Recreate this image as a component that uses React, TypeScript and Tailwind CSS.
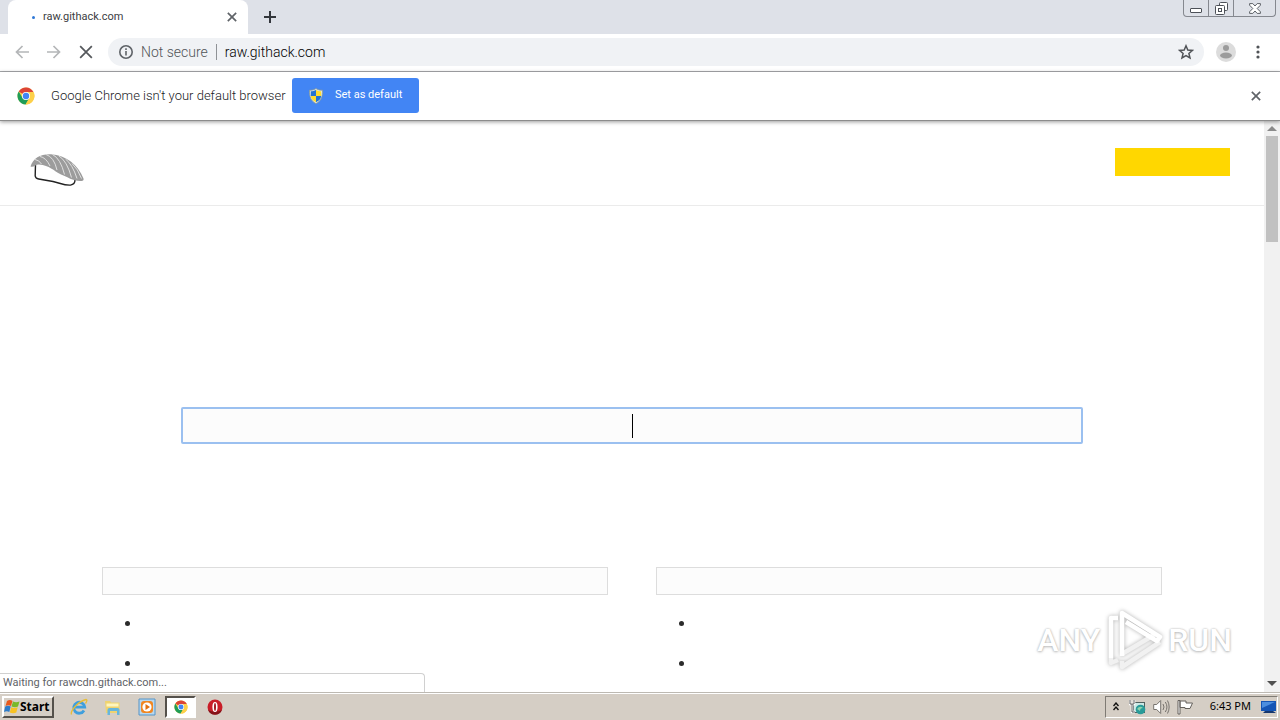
import React from "react";

function ChromeLogo({ className }: { className?: string }) {
  return (
    <svg viewBox="0 0 18 18" className={className} aria-hidden="true">
      <circle cx="9" cy="9" r="8.500" fill="#fdd04a" />
      <path d="M9 9 1.700 4.600A8.500 8.500 0 0 1 16.400 5H9Z" fill="#dc4437" />
      <path d="M1.700 4.600A8.500 8.500 0 0 0 8.600 17.500L12.400 11 9 9 5.600 11Z" fill="#1f9d58" />
      <path d="M9 5h7.400A8.500 8.500 0 0 1 8.600 17.500L12.400 11Z" fill="#fdd04a" />
      <circle cx="9" cy="9" r="4" fill="#fff" />
      <circle cx="9" cy="9" r="3.200" fill="#4285f4" />
    </svg>
  );
}

function Shield() {
  return (
    <svg viewBox="0 0 14 16" className="h-4 w-3.5" aria-hidden="true">
      <path d="M7 .5C5 2 3 2.200.5 2.200.400 8.500 1.600 12.700 7 15.600c5.400-2.900 6.600-7.100 6.500-13.400C11 2.200 9 2 7 .5Z" fill="#dfe9ee" stroke="#8c9a90" strokeWidth=".8" />
      <path d="M7 2C5.300 3 3.700 3.200 1.800 3.200V8H7Z" fill="#2373d2" />
      <path d="M7 2c1.700 1 3.300 1.200 5.200 1.200V8H7Z" fill="#ffdc2e" />
      <path d="M1.800 8H7v6.200C4 12.700 2 11 1.800 8Z" fill="#ffdc2e" />
      <path d="M12.200 8H7v6.200c3-1.500 5-3.200 5.200-6.200Z" fill="#2373d2" />
    </svg>
  );
}

function Cross({ className }: { className?: string }) {
  return (
    <svg viewBox="0 0 12 12" className={className} fill="none" stroke="currentColor" aria-hidden="true">
      <path d="m1 1 10 10m0-10L1 11" />
    </svg>
  );
}

function TabStrip() {
  return (
    <div className="flex h-[34px] shrink-0 items-start bg-[#dee1e8] pl-2">
      <div className="flex h-full w-60 items-center rounded-t-lg bg-white pl-6 pr-[9px]">
        <span className="mr-2 h-[3px] w-[3px] rounded-full bg-[#2f78d6]" />
        <span className="grow text-[11px] text-[#3c4043]">raw.githack.com</span>
        <button type="button" aria-label="Close tab" className="p-0.5 text-[#5f6368]">
          <Cross className="h-2.5 w-2.5 stroke-2" />
        </button>
      </div>
      <button type="button" aria-label="New tab" className="ml-4 mt-[11px] text-[#33363c]">
        <svg viewBox="0 0 12 12" className="h-3 w-3" stroke="currentColor" strokeWidth="2" aria-hidden="true">
          <path d="M6 0v12M0 6h12" />
        </svg>
      </button>
      <div className="ml-auto mr-1 flex h-[17px] rounded-b border border-t-0 border-[#85888f] text-[#4d5158]">
        <button type="button" aria-label="Minimize" className="flex w-[25px] items-end justify-center border-r border-[#85888f] pb-[3px]">
          <span className="h-[5px] w-3 rounded-[1px] border border-[#4d5158] bg-white" />
        </button>
        <button type="button" aria-label="Restore" className="flex w-[25px] items-center justify-center border-r border-[#85888f]">
          <svg viewBox="0 0 13 13" className="h-[13px] w-[13px]" fill="#fff" stroke="currentColor" aria-hidden="true">
            <rect x="4.500" y=".5" width="8" height="8" rx="1" />
            <rect x=".5" y="3.500" width="9" height="9" rx="1" />
            <rect x="3.500" y="6.500" width="3" height="3" />
          </svg>
        </button>
        <button type="button" aria-label="Close" className="flex w-[41px] items-center justify-center">
          <svg viewBox="0 0 12 11" className="h-[11px] w-3" fill="#fff" stroke="currentColor" strokeWidth=".9" aria-hidden="true">
            <path d="M.6.600h3.200L6 3 8.200.600h3.200v1.600L8.200 5.500l3.200 3.300v1.600H8.200L6 8l-2.200 2.400H.6V8.800l3.200-3.300L.6 2.200Z" />
          </svg>
        </button>
      </div>
    </div>
  );
}

function Toolbar() {
  return (
    <div className="flex h-[38px] shrink-0 items-center border-b border-[#a9abae] bg-white pb-px pl-[15px] pr-5">
      <button type="button" aria-label="Back" className="text-[#b4b6b8]">
        <svg viewBox="0 0 14 14" className="h-3.5 w-3.5" fill="none" stroke="currentColor" strokeWidth="1.700" aria-hidden="true">
          <path d="M14 7H1.500M7.500 1 1.500 7l6 6" />
        </svg>
      </button>
      <button type="button" aria-label="Forward" className="ml-[18px] text-[#b4b6b8]">
        <svg viewBox="0 0 14 14" className="h-3.5 w-3.5" fill="none" stroke="currentColor" strokeWidth="1.700" aria-hidden="true">
          <path d="M0 7h12.500M6.500 1l6 6-6 6" />
        </svg>
      </button>
      <button type="button" aria-label="Stop loading" className="ml-[18px] text-[#55585c]">
        <Cross className="h-3.5 w-3.5 stroke-[1.500]" />
      </button>
      <div className="ml-[15px] flex h-7 grow items-center rounded-full bg-[#f0f2f5] pl-[11px] pr-2.5">
        <svg viewBox="0 0 14 14" className="h-3.5 w-3.5" fill="none" stroke="#5f6368" strokeWidth="1.600" aria-hidden="true">
          <circle cx="7" cy="7" r="6.200" />
          <path d="M7 6v4.500M7 3.300v1.700" />
        </svg>
        <span className="ml-2 text-sm font-light text-[#505458]">Not secure</span>
        <span className="mx-2 h-4 w-px bg-[#8f9296]" />
        <input aria-label="Address" defaultValue="raw.githack.com" className="min-w-0 grow bg-transparent text-sm font-light text-black outline-none" />
        <button type="button" aria-label="Bookmark this page">
          <svg viewBox="0 0 16 16" className="h-4 w-4" fill="none" stroke="#505357" strokeWidth="1.500" aria-hidden="true">
            <path d="m8 1.800 1.800 4.200 4.600.4-3.500 3 1.100 4.500L8 11.500l-4 2.400 1.100-4.500-3.500-3L6.200 6Z" />
          </svg>
        </button>
      </div>
      <button type="button" aria-label="Profile" className="ml-3">
        <svg viewBox="0 0 20 20" className="h-5 w-5" aria-hidden="true">
          <circle cx="10" cy="10" r="10" fill="#dcdcdc" />
          <circle cx="10" cy="6" r="3" fill="#9b9b9b" />
          <ellipse cx="10" cy="13.500" rx="6" ry="2.900" fill="#9b9b9b" />
        </svg>
      </button>
      <button type="button" aria-label="Menu" className="ml-5">
        <svg viewBox="0 0 4 14" className="h-3.5 w-1" fill="#505357" aria-hidden="true">
          <circle cx="2" cy="2" r="1.600" />
          <circle cx="2" cy="7" r="1.600" />
          <circle cx="2" cy="12" r="1.600" />
        </svg>
      </button>
    </div>
  );
}

function DefaultBrowserBar() {
  return (
    <div className="z-10 flex h-[49px] shrink-0 items-center border-b border-[#8c8c8c] bg-white pb-px pl-[17px] pr-[19px] shadow-[0_1px_4px_rgba(0,0,0,0.4)]">
      <ChromeLogo className="h-[18px] w-[18px]" />
      <span className="ml-4 w-[241px] whitespace-nowrap text-[13px] font-light text-[#202124]">Google Chrome isn't your default browser</span>
      <button type="button" className="flex h-[35px] w-[127px] items-center gap-3 rounded-[3px] bg-[#4285f4] pl-[17px] text-[11px] text-white">
        <Shield />
        Set as default
      </button>
      <button type="button" aria-label="Dismiss" className="ml-auto text-[#5f6368]">
        <Cross className="h-2.5 w-2.5 stroke-2" />
      </button>
    </div>
  );
}

function SushiLogo() {
  return (
    <svg viewBox="0 0 56 34" className="h-[34px] w-14" fill="none" aria-hidden="true">
      <path d="M6.500 11 6.200 23q.3 2.500 3.500 3L24 28.500c7 1.500 11 4 17.500 3.600q4.500-.6 4.500-5" stroke="#222" strokeWidth="1.400" />
      <path d="M1.500 13.500C4 5 12 .8 22 1.300 37 2 49 12 54.500 25.500q.6 2.300-2 2.500C44 28.500 39 24 32 21.500c-8-4-11-9-22-10-4-.3-5 3.500-8.500 2Z" fill="#9c9c9c" />
      <path d="M6 6.500q4 .5 6.500 4.500M11 3.500q6 1 10 9.500M17 1.500q8 2.500 11 15.500M23.500 1.500q8 4 12 20M30 3q8 5 12.500 21.500M36.500 6q7 5.500 11.500 19.500M43 10.500q6 5.500 9.500 15" stroke="#e0e0e0" strokeWidth="1" />
    </svg>
  );
}

function Watermark() {
  return (
    <div className="absolute bottom-5 right-12 flex items-center gap-1 text-[32px] font-medium leading-none text-white [text-shadow:0_0_2px_#b0b0b0,0_1px_3px_#c4c4c4]">
      <span>ANY</span>
      <svg viewBox="0 0 60 64" className="h-16 w-[60px] drop-shadow-[0_0_2px_#b0b0b0]" fill="none" stroke="#fff" strokeWidth="4.500" strokeLinejoin="round" aria-hidden="true">
        <path d="M18 53v6L56 34M7 50v5L14 52M18 46 50 27" stroke="#f1f1f1" />
        <path d="M14 10H7v40" />
        <path d="M18 48V5L56 29l-3 4L22 14" />
      </svg>
      <span>RUN</span>
    </div>
  );
}

function LinkColumn() {
  return (
    <section>
      <div className="h-7 border border-[#dddddd] bg-[#fcfcfc]" />
      <ul className="mt-2">
        <li className="flex h-10 items-center pl-[23px]"><span className="h-[5px] w-[5px] rounded-full bg-[#2b2b2b]" /></li>
        <li className="flex h-10 items-center pl-[23px]"><span className="h-[5px] w-[5px] rounded-full bg-[#2b2b2b]" /></li>
      </ul>
    </section>
  );
}

function Page() {
  return (
    <div className="relative flex min-h-0 grow bg-white">
      <main className="min-w-0 grow overflow-hidden">
        <header className="flex h-[85px] items-start justify-between border-b border-[#ebebeb] pl-[29px] pr-[34px]">
          <div className="mt-8"><SushiLogo /></div>
          <button type="button" aria-label="Donate" className="mt-[27px] h-7 w-[115px] bg-[#ffd700]" />
        </header>
        <div className="relative mx-auto mt-[201px] w-[902px] max-w-full">
          <input aria-label="Repository address" className="block h-[37px] w-full rounded-[2px] border-2 border-[#9bc0f0] bg-[#fcfcfc] text-center outline-none" />
          <span className="absolute left-1/2 top-[7px] h-6 w-px bg-black" />
        </div>
        <div className="mx-auto mt-[123px] grid w-[1060px] max-w-full grid-cols-2 gap-12">
          <LinkColumn />
          <LinkColumn />
        </div>
      </main>
      <div className="flex w-4 shrink-0 flex-col items-center bg-[#f1f1f1] pb-1 pt-[5px]">
        <svg viewBox="0 0 8 4" className="h-[5px] w-2.5" fill="#8a8a8a" aria-hidden="true"><path d="m0 4 4-4 4 4Z" /></svg>
        <div className="mt-[5px] h-[106px] w-3 bg-[#c1c1c1]" />
        <svg viewBox="0 0 8 4" className="mb-0.5 mt-auto h-[5px] w-2.5" fill="#505050" aria-hidden="true"><path d="m0 0 4 4 4-4Z" /></svg>
      </div>
      <div className="absolute bottom-0 left-0 flex h-[19px] w-[425px] items-center rounded-tr border-r border-t border-[#d0d0d0] bg-white pl-[3px] text-[11px] text-[#5f6368]">
        Waiting for rawcdn.githack.com...
      </div>
      <Watermark />
    </div>
  );
}

function Taskbar() {
  return (
    <footer className="flex h-7 shrink-0 items-center border-t border-[#bdb9b2] bg-[#d5cec5] px-0.5 font-['Noto_Sans',sans-serif] shadow-[inset_0_1px_0_#fff]">
      <button type="button" className="flex h-[22px] w-[52px] items-center border-2 border-b-[#55514b] border-l-white border-r-[#55514b] border-t-white text-xs font-bold text-black">
        <svg viewBox="0 0 16 15" className="h-[15px] w-4 shrink-0" aria-hidden="true">
          <path d="M3 2q3-2 5.500 0L7 7Q4.500 5.500 1.500 7Z" fill="#e8591c" />
          <path d="M9 2.500q3 1.500 6.500 0L14 7.500q-3 1.500-6.500 0Z" fill="#79b929" />
          <path d="M1.200 7.500q3-1.700 5.500 0L5.300 13Q2.800 11.500 0 13Z" fill="#2c7bc9" />
          <path d="M7.200 8.200q3 1.500 6.500 0L12.300 13.500q-3 1.500-6.500 0Z" fill="#f8c223" />
        </svg>
        Start
      </button>
      <button type="button" aria-label="Internet Explorer" className="ml-4">
        <svg viewBox="0 0 18 18" className="h-[18px] w-[18px]" fill="none" aria-hidden="true">
          <path d="M14 12.500a5.500 5.500 0 1 1 .7-3.300H5" stroke="#3f9fdd" strokeWidth="2.800" />
          <path d="M1.500 16.500C0 13 8 3.500 16 1.500q2 .5-.5 4" stroke="#e8bd35" strokeWidth="1.300" />
        </svg>
      </button>
      <button type="button" aria-label="Explorer" className="ml-4">
        <svg viewBox="0 0 18 18" className="h-[18px] w-[18px]" aria-hidden="true">
          <path d="M1 3h5l1 1.500h8.500V15H2Z" fill="#efd36f" />
          <path d="M2.500 5.500h12v3h-12Z" fill="#fff5bd" />
          <path d="M3.500 17v-5q0-2 2-2h8q2 0 2 2v5H13v-4H6v4Z" fill="#67b6dc" />
        </svg>
      </button>
      <button type="button" aria-label="Media Player" className="ml-4">
        <svg viewBox="0 0 18 18" className="h-[18px] w-[18px]" aria-hidden="true">
          <path d="M1 1h16v16H1Z" fill="#b8d8ef" stroke="#5594c7" />
          <rect x="3" y="3" width="12" height="12" rx="3" fill="#f18722" />
          <circle cx="9" cy="9" r="4.600" fill="#fff" />
          <path d="m7.500 6 4.500 3-4.500 3Z" fill="#e27110" />
        </svg>
      </button>
      <button type="button" aria-label="Chrome" className="ml-[9px] flex h-[22px] w-[31px] items-center justify-center border-2 border-b-white border-l-[#55514b] border-r-white border-t-[#55514b] bg-white">
        <ChromeLogo className="h-3.5 w-3.5" />
      </button>
      <button type="button" aria-label="Opera" className="ml-[11px]">
        <svg viewBox="0 0 16 16" className="h-4 w-4" aria-hidden="true">
          <circle cx="8" cy="8" r="7.500" fill="#c91d28" />
          <path d="M1 11a7.500 7.500 0 0 0 14 0Q8 14 1 11Z" fill="#851218" />
          <ellipse cx="8" cy="8" rx="2.600" ry="5" fill="#fff" />
          <ellipse cx="8" cy="8" rx="1" ry="4" fill="#a01820" />
        </svg>
      </button>
      <div className="ml-auto flex h-[22px] items-center border border-b-white border-l-[#7f7b74] border-r-white border-t-[#7f7b74] pl-[7px] text-[11px] text-black">
        <svg viewBox="0 0 6 9" className="h-[9px] w-1.5" fill="none" stroke="#111" strokeWidth="1.400" aria-hidden="true">
          <path d="m.5 4 2.500-3 2.500 3M.5 8 3 5l2.500 3" />
        </svg>
        <svg viewBox="0 0 17 16" className="ml-2.5 h-4 w-[17px]" aria-hidden="true">
          <rect x="4.500" y="3.500" width="11" height="10" fill="#cce9e6" stroke="#50605f" />
          <path d="M1 1v4h4V1M3 5v8h3" fill="none" stroke="#fff" strokeWidth="2.600" />
          <path d="M1 1v4h4V1M3 5v8h3" fill="none" stroke="#5c5c5c" />
          <circle cx="11.500" cy="10.500" r="4.800" fill="#299b99" />
          <path d="M8 10q3-4 6-1-3 0-3 3" fill="#8ed3ad" />
        </svg>
        <svg viewBox="0 0 17 16" className="ml-[7px] h-4 w-[17px]" fill="none" stroke="#77736e" aria-hidden="true">
          <path d="M.7 5.500h3l4-4v13l-4-4h-3Z" fill="#fff" />
          <path d="M10 5q2 3 0 6M12.300 3q3.300 5 0 10M14.500 1.500q3.300 6.500 0 13" />
        </svg>
        <svg viewBox="0 0 17 16" className="ml-[7px] h-4 w-[17px]" fill="#fff" stroke="#65615c" aria-hidden="true">
          <path d="M1 1.500h2V15H1ZM3 2h6v2h6.500L13 9.500H8V8.500H3Z" />
        </svg>
        <span className="ml-4 mr-2.5 whitespace-nowrap">6:43 PM</span>
        <svg viewBox="0 0 16 14" className="h-3.5 w-4" aria-hidden="true">
          <path d="M0 1h15v10H0Z" fill="#1555b5" />
          <path d="M1 2h13L1 8Z" fill="#4c8edf" />
          <path d="M4 11h8l3 2H2Z" fill="#16376e" />
        </svg>
      </div>
    </footer>
  );
}

export default function App() {
  return (
    <div className="flex h-screen flex-col overflow-hidden font-['Roboto','Noto_Sans',sans-serif]">
      <TabStrip />
      <Toolbar />
      <DefaultBrowserBar />
      <Page />
      <Taskbar />
    </div>
  );
}
